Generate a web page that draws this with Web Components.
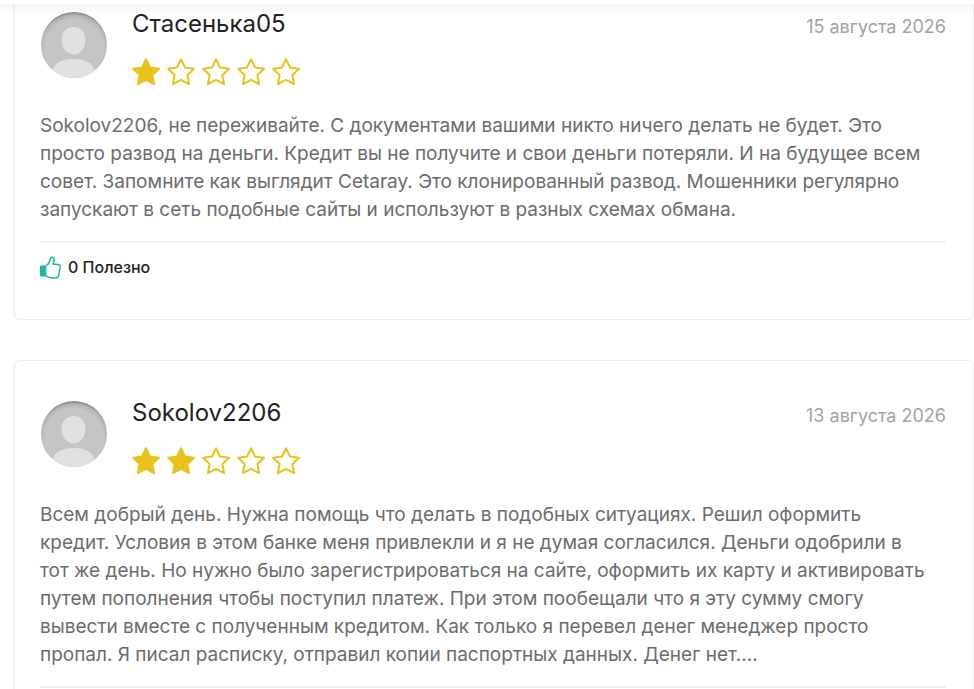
<!DOCTYPE html>
<html lang="ru">
<head>
<meta charset="utf-8">
<meta name="viewport" content="width=device-width, initial-scale=1">
<title>Отзывы</title>
<style>
	html{
		overflow: hidden;
	}
	body{
		margin: 0;
		height: 100vh;
		overflow: hidden;
		background: #fff;
		color: #6c6c6c;
		font-family: Inter, "Open Sans", sans-serif;
	}
</style>
</head>
<body>

<page-bar></page-bar>

<review-list>
	<review-card class="first" autor="Стасенька05" fecha="15 августа 2026" iso="2026-08-15" nota="1">
		Sokolov2206, не переживайте. С документами вашими никто ничего делать не будет. Это<br>
		просто развод на деньги. Кредит вы не получите и свои деньги потеряли. И на будущее всем<br>
		совет. Запомните как выглядит Cetaray. Это клонированный развод. Мошенники регулярно<br>
		запускают в сеть подобные сайты и используют в разных схемах обмана.
		<useful-button slot="footer" total="0"></useful-button>
	</review-card>

	<review-card autor="Sokolov2206" fecha="13 августа 2026" iso="2026-08-13" nota="2">
		Всем добрый день. Нужна помощь что делать в подобных ситуациях. Решил оформить<br>
		кредит. Условия в этом банке меня привлекли и я не думая согласился. Деньги одобрили в<br>
		тот же день. Но нужно было зарегистрироваться на сайте, оформить их карту и активировать<br>
		путем пополнения чтобы поступил платеж. При этом пообещали что я эту сумму смогу<br>
		вывести вместе с полученным кредитом. Как только я перевел денег менеджер просто<br>
		пропал. Я писал расписку, отправил копии паспортных данных. Денег нет....
	</review-card>
</review-list>

<script>
class PageBar extends HTMLElement{
	constructor(){
		super();
		this.attachShadow({mode:"open"}).innerHTML =
		`
		<style>
		:host{
			display: block;
			position: sticky;
			top: 0;
			z-index: 1;
			height: 4px;
			background: #fff;
			box-shadow: 0 0 14px rgba(0,0,0,.18);
		}
		</style>
		`;
	}
}

class ReviewList extends HTMLElement{
	constructor(){
		super();
		this.attachShadow({mode:"open"}).innerHTML =
		`
		<style>
		:host{
			display: flex;
			flex-direction: column;
			gap: 40px;
			padding-left: 13px;
		}
		</style>
		<slot></slot>
		`;
	}
}

class UserAvatar extends HTMLElement{
	constructor(){
		super();
		this.attachShadow({mode:"open"}).innerHTML =
		`
		<style>
		:host{
			display: block;
			width: 66px;
			height: 66px;
			border-radius: 50%;
			overflow: hidden;
			flex: none;
		}
		svg{
			display: block;
			width: 100%;
			height: 100%;
		}
		</style>
		<svg viewBox="0 0 66 66" aria-hidden="true">
			<defs>
				<radialGradient id="fondo" cx=".5" cy=".56" r=".56">
					<stop offset=".8" stop-color="#c4c4c4"/>
					<stop offset=".92" stop-color="#b2b2b2"/>
					<stop offset="1" stop-color="#7c7c7c"/>
				</radialGradient>
			</defs>
			<rect width="66" height="66" fill="url(#fondo)"/>
			<path fill="#e1e1e1" d="M32.500 15C40 15 44.500 20.500 44.500 28C44.500 36 39 42.500 32.500 42.500S20.500 36 20.500 28C20.500 20.500 25 15 32.500 15Z"/>
			<path fill="#e1e1e1" d="M11 66V59C14 50 22 47 32.500 47S51 50 54 59V66Z"/>
		</svg>
		`;
	}
}

class StarRating extends HTMLElement{
	constructor(){
		super();
		this.attachShadow({mode:"open"});
	}

	connectedCallback(){
		const value = Number(this.getAttribute("value")) || 0;
		let stars = "";
		for(let i = 1; i <= 5; i++){
			stars += `<svg viewBox="1 0 30 29" class="${i <= value ? "on" : ""}"><path d="M15 2.200L19 10.500L28 11.700L21.400 18L23.100 27.100L15 22.800L6.900 27.100L8.600 18L2.200 11.700L11 10.500Z"/></svg>`;
		}

		this.shadowRoot.innerHTML =
		`
		<style>
		:host{
			display: block;
		}
		div{
			display: flex;
			gap: 5px;
		}
		svg{
			width: 30px;
			height: 29px;
			fill: none;
			stroke: #e8c31b;
			stroke-width: 2;
			stroke-linejoin: round;
		}
		.on{
			fill: #e8c31b;
		}
		</style>
		<div role="img" aria-label="${value} / 5">${stars}</div>
		`;
	}
}

class UsefulButton extends HTMLElement{
	constructor(){
		super();
		this.attachShadow({mode:"open"});
	}

	connectedCallback(){
		const total = this.getAttribute("total") || "0";

		this.shadowRoot.innerHTML =
		`
		<style>
		:host{
			display: block;
		}
		button{
			display: flex;
			align-items: center;
			gap: 7px;
			padding: 0;
			border: 0;
			background: none;
			color: #222;
			font: 500 16px/24px Inter, "Open Sans", sans-serif;
			cursor: pointer;
		}
		svg{
			width: 21px;
			height: 23px;
		}
		</style>
		<button type="button">
			<svg viewBox="0 0 21 23" aria-hidden="true">
				<path fill="#1abc9c" d="M0 10.500Q0 9.500 1 9.500H5.500V20.500H1Q0 20.500 0 19.500Z"/>
				<path fill="none" stroke="#1abc9c" stroke-width="1.500" stroke-linejoin="round" d="M5.500 10.300C8.500 8.500 10 5.500 10.300 2.700C10.500 .7 13.500 .5 14 2.800C14.400 4.600 13.700 6.700 12.900 8.100L18.400 8.600C19.900 8.800 20.400 9.900 20.200 11.200L18.700 19.400C18.400 21.200 17.400 22 15.800 22H12C9.500 22 7.500 21 5.500 19.700Z"/>
			</svg>
			<span>${total} Полезно</span>
		</button>
		`;
	}
}

class ReviewCard extends HTMLElement{
	constructor(){
		super();
		this.attachShadow({mode:"open"});
	}

	connectedCallback(){
		const autor = this.getAttribute("autor") || "";
		const fecha = this.getAttribute("fecha") || "";
		const iso = this.getAttribute("iso") || "";
		const nota = this.getAttribute("nota") || "0";

		this.shadowRoot.innerHTML =
		`
		<style>
		:host{
			display: block;
			padding: 40px 27px 40px 25px;
			border: 1px solid #ececec;
			border-left: 2px solid #f2f2f2;
			border-radius: 7px;
		}
		:host(.first){
			padding-top: 8px;
			border-top: 0;
			border-top-left-radius: 0;
			border-top-right-radius: 0;
		}
		header{
			display: flex;
			gap: 25px;
			padding-left: 1px;
		}
		.info{
			flex: 1;
		}
		h2{
			margin: 0 0 21px;
			color: #222;
			font-size: 24px;
			font-weight: 400;
			line-height: 24px;
		}
		time{
			color: #a3a3a3;
			font-size: 18px;
			line-height: 30px;
		}
		p{
			margin: 26px 0 17px;
			font-size: 19px;
			line-height: 28px;
			white-space: nowrap;
		}
		footer{
			padding-top: 12px;
			border-top: 2px solid #f1f1f1;
		}
		</style>
		<article>
			<header>
				<user-avatar></user-avatar>
				<div class="info">
					<h2>${autor}</h2>
					<star-rating value="${nota}"></star-rating>
				</div>
				<time datetime="${iso}">${fecha}</time>
			</header>
			<p><slot></slot></p>
			<footer><slot name="footer"></slot></footer>
		</article>
		`;
	}
}

customElements.define("page-bar",PageBar);
customElements.define("review-list",ReviewList);
customElements.define("user-avatar",UserAvatar);
customElements.define("star-rating",StarRating);
customElements.define("useful-button",UsefulButton);
customElements.define("review-card",ReviewCard);
</script>
</body>
</html>
